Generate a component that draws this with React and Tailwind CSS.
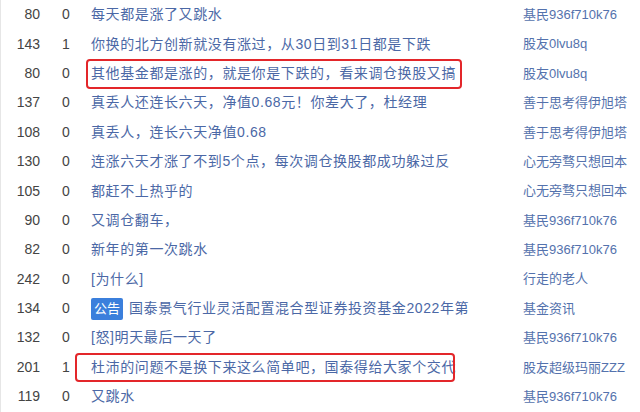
import React from 'react';

const rows = [
  { read: 80, reply: 0, title: '每天都是涨了又跳水', author: '基民936f710k76' },
  { read: 143, reply: 1, title: '你换的北方创新就没有涨过，从30日到31日都是下跌', author: '股友0lvu8q' },
  { read: 80, reply: 0, title: '其他基金都是涨的，就是你是下跌的，看来调仓换股又搞', author: '股友0lvu8q', mark: 'a' },
  { read: 137, reply: 0, title: '真丢人还连长六天，净值0.68元！你差大了，杜经理', author: '善于思考得伊旭塔' },
  { read: 108, reply: 0, title: '真丢人，连长六天净值0.68', author: '善于思考得伊旭塔' },
  { read: 130, reply: 0, title: '连涨六天才涨了不到5个点，每次调仓换股都成功躲过反', author: '心无旁骛只想回本' },
  { read: 105, reply: 0, title: '都赶不上热乎的', author: '心无旁骛只想回本' },
  { read: 90, reply: 0, title: '又调仓翻车，', author: '基民936f710k76' },
  { read: 82, reply: 0, title: '新年的第一次跳水', author: '基民936f710k76' },
  { read: 242, reply: 0, title: '[为什么]', author: '行走的老人' },
  { read: 134, reply: 0, title: '国泰景气行业灵活配置混合型证券投资基金2022年第', author: '基金资讯', notice: true },
  { read: 132, reply: 0, title: '[怒]明天最后一天了', author: '基民936f710k76' },
  { read: 201, reply: 1, title: '杜沛的问题不是换下来这么简单吧，国泰得给大家个交代', author: '股友超级玛丽ZZZ', mark: 'b' },
  { read: 119, reply: 0, title: '又跳水', author: '基民936f710k76' },
];

const font = { fontFamily: '"Liberation Sans", "Noto Sans CJK SC", sans-serif' };

export default function App() {
  return (
    <div className="w-[640px] h-[412px] bg-white overflow-hidden border-l border-[#e6e6e6]" style={font}>
      {rows.map((r, i) => (
        <div key={i} className="flex items-center h-[29.4px]">
          <div className="w-[39px] text-right text-[14px] text-[#444]">{r.read}</div>
          <div className="w-[28px] ml-[12px] text-center text-[14px] text-[#444]">{r.reply}</div>
          <div className="relative flex-1 flex items-center pl-[11px] text-[14px] tracking-[0.6px] text-[#4b68a6] whitespace-nowrap">
            {r.notice && (
              <span className="mr-[6px] px-[3px] h-[22px] leading-[22px] rounded-[2px] bg-[#3b7fdc] text-white text-[13px] tracking-normal">公告</span>
            )}
            <span>{r.title}</span>
            {r.mark === 'a' && (
              <div className="absolute left-[6px] top-[-4px] w-[376px] h-[30px] border-[2.5px] border-[#e3262a] rounded-[4px]" />
            )}
            {r.mark === 'b' && (
              <div className="absolute left-[-5px] top-[-4px] w-[380px] h-[29px] border-[2.5px] border-[#e3262a] rounded-[4px]" />
            )}
          </div>
          <div className="w-[117px] text-[13px] text-[#5472ad] whitespace-nowrap">{r.author}</div>
        </div>
      ))}
    </div>
  );
}
